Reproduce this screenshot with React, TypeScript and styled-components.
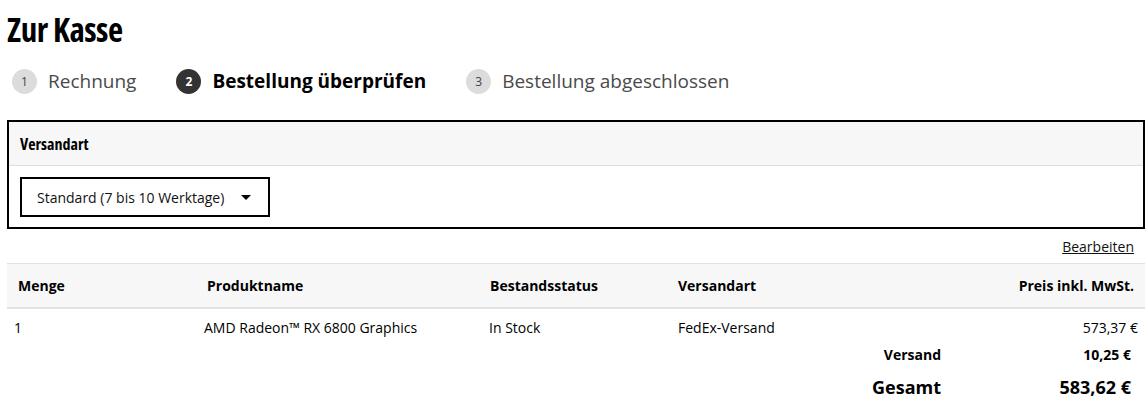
import React from 'react';
import styled, { createGlobalStyle } from 'styled-components';

const GlobalStyle = createGlobalStyle`
  html, body {
    margin: 0;
    padding: 0;
    background: #fff;
    color: #000;
    font-family: 'Open Sans', 'Noto Sans', sans-serif;
  }
`;

const condensed = `'Open Sans', 'Roboto', sans-serif`;

const Page = styled.main`
  width: 1145px;
  padding: 0 0 0 7px;
  box-sizing: border-box;
`;

const Title = styled.h1`
  margin: 0;
  padding-top: 11px;
  font-family: ${condensed};
  font-stretch: 75%;
  font-weight: 700;
  font-size: 33px;
  line-height: 38px;
  letter-spacing: -0.5px;
`;

const Steps = styled.ol`
  display: flex;
  align-items: center;
  list-style: none;
  margin: 0;
  padding: 20px 0 0 5px;
  height: 25px;
  gap: 40px;
`;

const Step = styled.li<{ $active?: boolean }>`
  display: flex;
  align-items: center;
  gap: 11px;
  font-size: 19px;
  line-height: 25px;
  color: ${({ $active }) => ($active ? '#000' : '#4a4a4a')};
  font-weight: ${({ $active }) => ($active ? 700 : 400)};
`;

const StepNum = styled.span<{ $active?: boolean }>`
  display: inline-flex;
  align-items: center;
  justify-content: center;
  width: 25px;
  height: 25px;
  border-radius: 50%;
  font-size: 12px;
  font-weight: ${({ $active }) => ($active ? 700 : 400)};
  background: ${({ $active }) => ($active ? '#333' : '#dcdcdc')};
  color: ${({ $active }) => ($active ? '#fff' : '#444')};
`;

const Panel = styled.section`
  margin-top: 26px;
  width: 1138px;
  box-sizing: border-box;
  border: 2px solid #000;
`;

const PanelHeader = styled.div`
  height: 43px;
  display: flex;
  align-items: center;
  padding-left: 11px;
  background: #f7f7f7;
  border-bottom: 1px solid #dedede;
  font-family: ${condensed};
  font-stretch: 75%;
  font-weight: 700;
  font-size: 16px;
`;

const PanelBody = styled.div`
  padding: 11px 11px 10px;
`;

const Select = styled.button`
  display: flex;
  align-items: center;
  gap: 17px;
  width: 250px;
  height: 40px;
  box-sizing: border-box;
  border: 2px solid #000;
  background: #fff;
  padding: 0 0 0 15px;
  font-family: 'Open Sans', sans-serif;
  font-size: 14px;
  color: #111;
`;

const Caret = styled.span`
  width: 0;
  height: 0;
  border-left: 5px solid transparent;
  border-right: 5px solid transparent;
  border-top: 5px solid #000;
`;

const EditRow = styled.div`
  display: flex;
  justify-content: flex-end;
  width: 1138px;
  padding: 7px 11px 6px 0;
  box-sizing: border-box;
`;

const EditLink = styled.a`
  font-size: 14px;
  color: #111;
  text-decoration: underline;
  line-height: 21px;
`;

const Grid = styled.div`
  display: grid;
  grid-template-columns: 189px 283px 188px 1fr 220px;
  width: 1138px;
`;

const HeadRow = styled(Grid)`
  height: 43px;
  align-items: center;
  background: #f7f7f7;
  border-top: 1px solid #e2e2e2;
  border-bottom: 2px solid #e2e2e2;
  font-weight: 700;
  font-size: 14px;
`;

const HeadCell = styled.div<{ $right?: boolean }>`
  padding: 0 11px;
  text-align: ${({ $right }) => ($right ? 'right' : 'left')};
`;

const BodyRow = styled(Grid)`
  height: 36px;
  align-items: center;
  font-size: 14px;
`;

const Cell = styled.div<{ $pad: number; $right?: boolean }>`
  padding-left: ${({ $pad }) => $pad}px;
  padding-right: 7px;
  text-align: ${({ $right }) => ($right ? 'right' : 'left')};
  white-space: nowrap;
`;

const Totals = styled.div`
  display: grid;
  grid-template-columns: 934px 190px;
  width: 1138px;
  font-weight: 700;
`;

const TotalCell = styled.div<{ $big?: boolean }>`
  text-align: right;
  font-size: ${({ $big }) => ($big ? 18 : 14)}px;
  line-height: ${({ $big }) => ($big ? 36 : 20)}px;
  padding-top: ${({ $big }) => ($big ? 4 : 0)}px;
`;

const steps = [
  { n: 1, label: 'Rechnung' },
  { n: 2, label: 'Bestellung überprüfen', active: true },
  { n: 3, label: 'Bestellung abgeschlossen' },
];

export default function App() {
  return (
    <Page>
      <GlobalStyle />
      <Title>Zur Kasse</Title>
      <Steps>
        {steps.map((s) => (
          <Step key={s.n} $active={s.active}>
            <StepNum $active={s.active}>{s.n}</StepNum>
            {s.label}
          </Step>
        ))}
      </Steps>
      <Panel>
        <PanelHeader>Versandart</PanelHeader>
        <PanelBody>
          <Select type="button">
            Standard (7 bis 10 Werktage)
            <Caret />
          </Select>
        </PanelBody>
      </Panel>
      <EditRow>
        <EditLink href="#">Bearbeiten</EditLink>
      </EditRow>
      <HeadRow>
        <HeadCell>Menge</HeadCell>
        <HeadCell>Produktname</HeadCell>
        <HeadCell>Bestandsstatus</HeadCell>
        <HeadCell>Versandart</HeadCell>
        <HeadCell $right>Preis inkl. MwSt.</HeadCell>
      </HeadRow>
      <BodyRow>
        <Cell $pad={7}>1</Cell>
        <Cell $pad={8}>AMD Radeon™ RX 6800 Graphics</Cell>
        <Cell $pad={10}>In Stock</Cell>
        <Cell $pad={11}>FedEx-Versand</Cell>
        <Cell $pad={0} $right>573,37 €</Cell>
      </BodyRow>
      <Totals>
        <TotalCell>Versand</TotalCell>
        <TotalCell>10,25 €</TotalCell>
        <TotalCell $big>Gesamt</TotalCell>
        <TotalCell $big>583,62 €</TotalCell>
      </Totals>
    </Page>
  );
}
